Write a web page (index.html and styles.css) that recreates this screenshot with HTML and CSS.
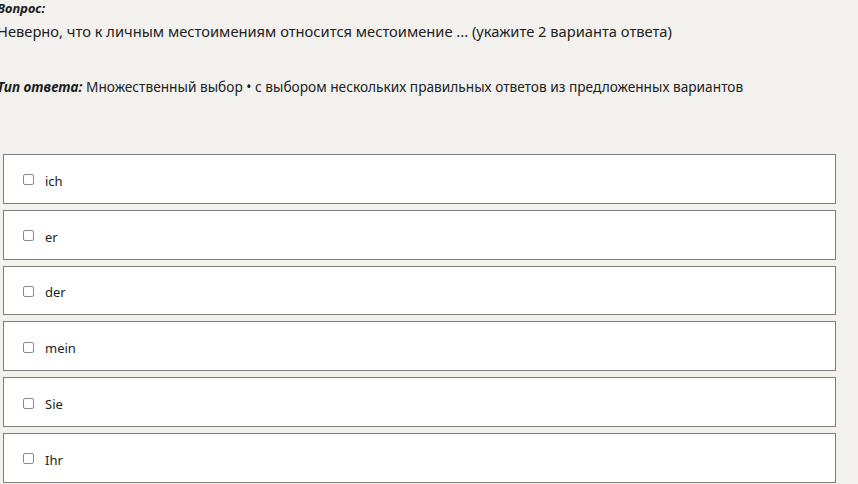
FILE: index.html
```html
<!DOCTYPE html>
<html lang="ru">
<head>
    <meta charset="UTF-8">
    <meta name="viewport" content="width=device-width, initial-scale=1.0">
    <title>Вопрос</title>
    <link rel="stylesheet" href="styles.css">
</head>
<body>
    <div class="task">
        <div class="question">
            <div class="label">Вопрос:</div>
            <div class="question-text">Неверно, что к личным местоимениям относится местоимение ... (укажите 2 варианта ответа)</div>
        </div>
        <div class="answer-type">
            <span class="label">Тип ответа:</span> Множественный выбор • с выбором нескольких правильных ответов из предложенных вариантов
        </div>

        <div class="options">
            <label class="option"><span class="box"></span><span>ich</span></label>
            <label class="option"><span class="box"></span><span>er</span></label>
            <label class="option"><span class="box"></span><span>der</span></label>
            <label class="option"><span class="box"></span><span>mein</span></label>
            <label class="option"><span class="box"></span><span>Sie</span></label>
            <label class="option"><span class="box"></span><span>Ihr</span></label>
        </div>
    </div>
</body>
</html>
```

FILE: styles.css
```css
body, html {
    margin: 0;
    padding: 0;
    height: 100%;
    background-color: #f2f1ee;
}

body {
    font-family: "Noto Sans", "Open Sans", sans-serif;
    color: #222;
    font-size: 14px;
    overflow: hidden;
}

.task {
    display: flex;
    flex-direction: column;
}

.question {
    margin-left: -3px;
    line-height: 20px;
}

.label {
    font-weight: bold;
    font-style: italic;
    color: #1e1e1e;
}

.question .label {
    font-size: 13px;
    margin-top: -2px;
    line-height: 20px;
}

.question-text {
    margin-top: 3px;
    font-size: 14.7px;
}

.answer-type {
    margin-left: -3px;
    margin-top: 36px;
    font-size: 13.7px;
    line-height: 20px;
}

.options {
    display: flex;
    flex-direction: column;
    gap: 6px;
    margin-top: 57px;
    margin-left: 3px;
    width: 833px;
}

.option {
    display: flex;
    align-items: center;
    box-sizing: border-box;
    height: 49.8px;
    border: 1px solid #7d7d7d;
    background-color: #fff;
    padding: 4px 0 0 19px;
    font-size: 13px;
    color: #222;
}

/* квадратик чекбокса */
.box {
    width: 9px;
    height: 9px;
    border: 1px solid #8a8a8a;
    border-radius: 2px;
    margin-right: 11px;
    margin-top: -2px;
}
```
